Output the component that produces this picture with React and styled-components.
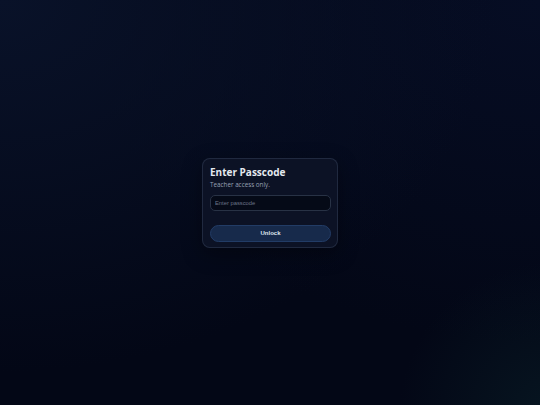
import React, { useState } from "react";
import styled, { createGlobalStyle } from "styled-components";

const GlobalStyle = createGlobalStyle`
  html, body {
    margin: 0;
    padding: 0;
    height: 100%;
  }
  #root {
    height: 100%;
  }
`;

function App() {
  const [code, setCode] = useState("");

  return (
    <>
      <GlobalStyle />
      <Page>
        <Card>
          <Title>Enter Passcode</Title>
          <Subtitle>Teacher access only.</Subtitle>
          <Input
            type="password"
            placeholder="Enter passcode"
            value={code}
            onChange={(e) => setCode(e.target.value)}
          />
          <Button>Unlock</Button>
        </Card>
      </Page>
    </>
  );
}

export default App;

const Page = styled.div`
  width: 100%;
  height: 100vh;
  display: flex;
  align-items: center;
  justify-content: center;
  font-family: "Open Sans", "Noto Sans", sans-serif;
  background:
    radial-gradient(circle at 102% 102%, rgba(14, 48, 52, 0.35), transparent 22%),
    radial-gradient(ellipse at 0% 0%, #091229, transparent 65%),
    radial-gradient(ellipse at 100% 0%, #060d24, transparent 60%),
    #030716;
`;

const Card = styled.div`
  width: 121px;
  padding: 7px 6px 5px 7px;
  display: flex;
  flex-direction: column;
  background: rgba(13, 20, 38, 0.92);
  border: 1px solid rgba(71, 85, 115, 0.35);
  border-radius: 8px;
  box-shadow: 0 6px 20px rgba(0, 0, 0, 0.35);
`;

const Title = styled.h1`
  margin: 0;
  font-size: 10px;
  line-height: 13px;
  font-weight: 700;
  color: #e5e9f0;
`;

const Subtitle = styled.p`
  margin: 1px 0 0;
  font-size: 6.3px;
  line-height: 10px;
  color: #97a0b2;
`;

const Input = styled.input`
  box-sizing: border-box;
  margin-top: 5px;
  width: 100%;
  height: 16px;
  padding: 0 4px;
  background: #050a17;
  border: 1px solid #283245;
  border-radius: 5px;
  color: #e2e8f0;
  font-family: "Liberation Sans", Arial, sans-serif;
  font-size: 5.8px;
  outline: none;

  &::placeholder {
    color: #6b7488;
  }
`;

const Button = styled.button`
  box-sizing: border-box;
  margin-top: 14px;
  width: 100%;
  height: 17px;
  background: #172a4b;
  border: 1px solid #223c66;
  border-radius: 9px;
  color: #dde4ee;
  font-family: "Liberation Sans", Arial, sans-serif;
  font-size: 6px;
  font-weight: 700;
  cursor: pointer;
`;
